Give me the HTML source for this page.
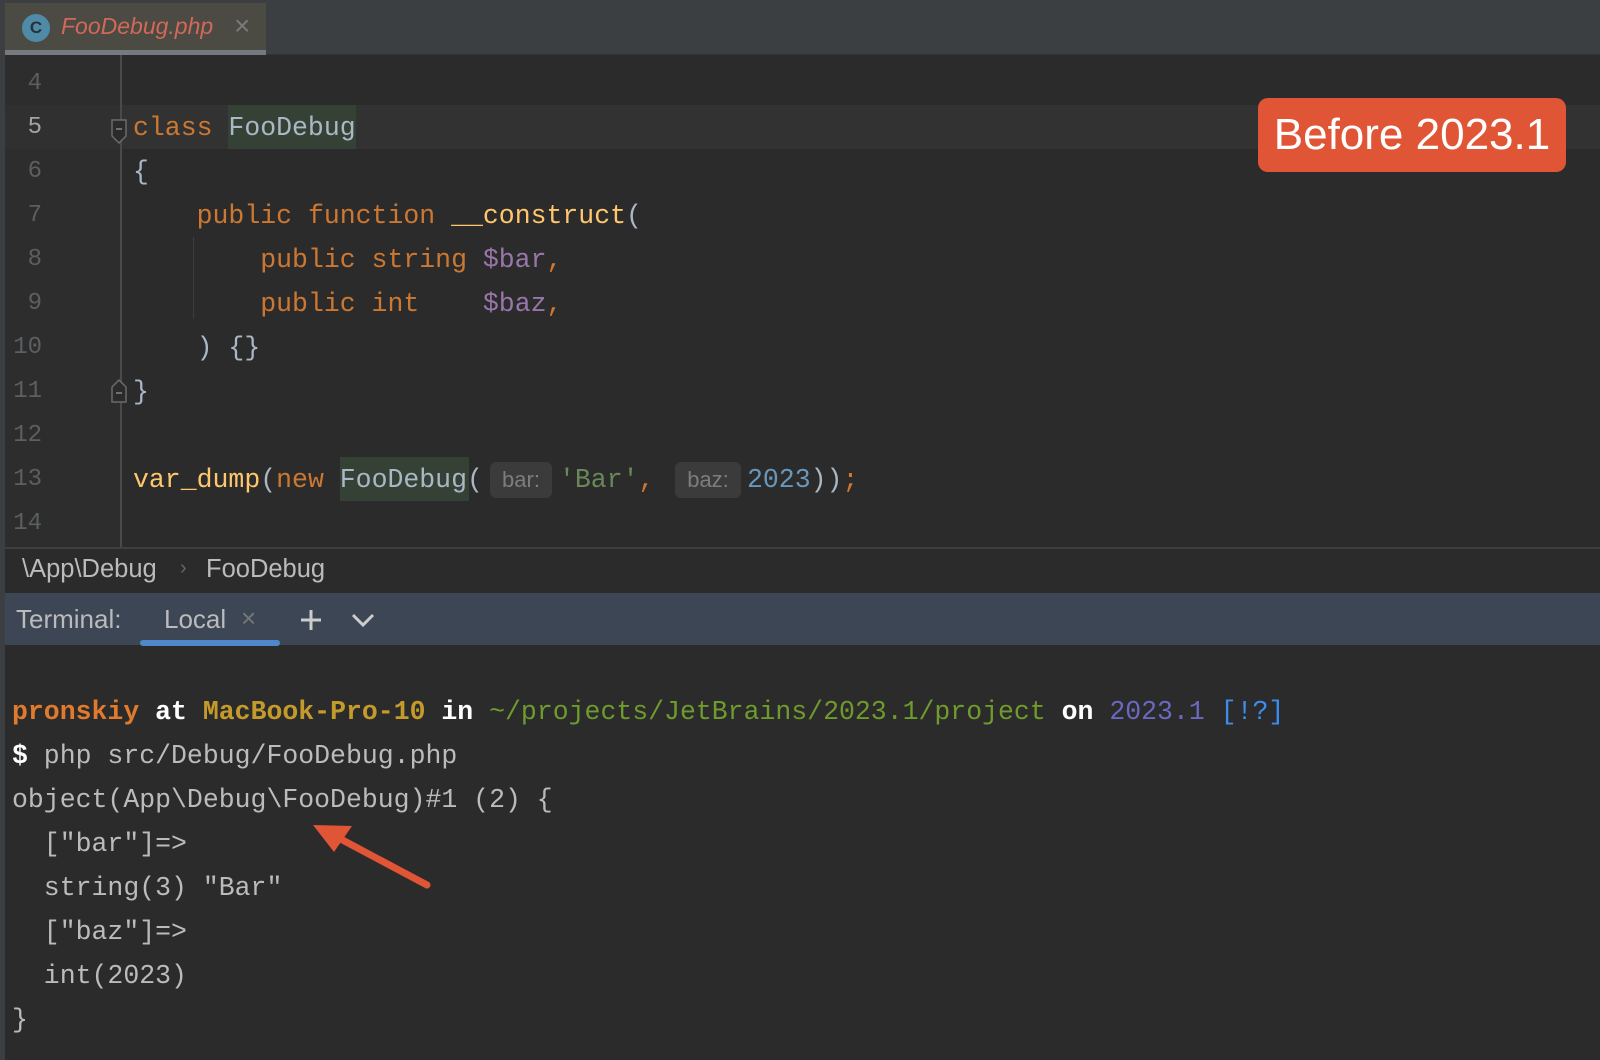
<!DOCTYPE html>
<html><head><meta charset="utf-8"><style>
*{margin:0;padding:0;box-sizing:border-box}
body{width:1600px;height:1060px;background:#2b2b2b;position:relative;overflow:hidden;font-family:"Liberation Sans",sans-serif}
.mono{font-family:"Liberation Mono",monospace;font-size:26.5px;white-space:pre;position:absolute;line-height:44px}
.ln{position:absolute;left:8px;width:34px;text-align:right;font-family:"Liberation Mono",monospace;font-size:24px;color:#5c5f61;line-height:44px}
.k{color:#cc7832}.c{color:#a9b7c6}.v{color:#9876aa}.s{color:#6a8759}.n{color:#6897bb}.f{color:#ffc66d}
.hint{position:absolute;background:#3b3b3b;color:#7d7d7d;font-size:22px;border-radius:6px;height:36px;line-height:36px;text-align:center}
.t{color:#bbbbbb}
</style></head><body>
<div style="position:absolute;left:0;top:0;width:1600px;height:3px;background:#3c3f41"></div>
<div style="position:absolute;left:0;top:0;width:5px;height:1060px;background:#3c3f41"></div>
<div style="position:absolute;left:5px;top:3px;width:1595px;height:52px;background:#3c3f41;border-bottom:1px solid #323232"></div>
<div style="position:absolute;left:5px;top:3px;width:261px;height:52px;background:#4b4a43"></div>
<div style="position:absolute;left:5px;top:50px;width:261px;height:5px;background:#747a80"></div>
<div style="position:absolute;left:22px;top:14px;width:28px;height:28px;border-radius:50%;background:#4f8aa6;color:#26323a;font-size:17px;font-weight:bold;text-align:center;line-height:28px">C</div>
<div style="position:absolute;left:61px;top:13px;font-size:23px;font-style:italic;color:#d2685a">FooDebug.php</div>
<div style="position:absolute;left:234px;top:10px;font-size:28px;color:#7a7a7a">×</div>
<div style="position:absolute;left:5px;top:55px;width:116px;height:493px;background:#2d2d2d"></div>
<div style="position:absolute;left:120px;top:55px;width:2px;height:493px;background:#4a4a4a"></div>
<div style="position:absolute;left:122px;top:105px;width:1478px;height:44px;background:#323232"></div>
<div style="position:absolute;left:5px;top:105px;width:115px;height:44px;background:#303030"></div>
<div class="ln" style="top:62px">4</div>
<div class="ln" style="top:106px;color:#a4a3a3">5</div>
<div class="ln" style="top:150px">6</div>
<div class="ln" style="top:194px">7</div>
<div class="ln" style="top:238px">8</div>
<div class="ln" style="top:282px">9</div>
<div class="ln" style="top:326px">10</div>
<div class="ln" style="top:370px">11</div>
<div class="ln" style="top:414px">12</div>
<div class="ln" style="top:458px">13</div>
<div class="ln" style="top:502px">14</div>
<svg style="position:absolute;left:110px;top:118px" width="20" height="28"><path d="M2 2H16V18L9 25L2 18Z" fill="#2b2b2b" stroke="#6b6b6b" stroke-width="1.5"/><path d="M6 11H12" stroke="#888" stroke-width="1.5"/></svg>
<svg style="position:absolute;left:110px;top:378px" width="20" height="26"><path d="M2 24H16V9L9 2L2 9Z" fill="#2b2b2b" stroke="#6b6b6b" stroke-width="1.5"/><path d="M6 15H12" stroke="#888" stroke-width="1.5"/></svg>
<div style="position:absolute;left:193px;top:237px;width:1px;height:82px;background:#3d3d3d"></div>
<div style="position:absolute;left:228px;top:105px;width:128px;height:44px;background:#344134"></div>
<div class="mono" style="left:133px;top:106px"><span class="k">class</span> <span class="c">FooDebug</span></div>
<div class="mono c" style="left:133px;top:150px">{</div>
<div class="mono" style="left:133px;top:194px">    <span class="k">public function</span> <span class="f">__construct</span><span class="c">(</span></div>
<div class="mono" style="left:133px;top:238px">        <span class="k">public string</span> <span class="v">$bar</span><span class="k">,</span></div>
<div class="mono" style="left:133px;top:282px">        <span class="k">public int</span>    <span class="v">$baz</span><span class="k">,</span></div>
<div class="mono c" style="left:133px;top:326px">    ) {}</div>
<div class="mono c" style="left:133px;top:370px">}</div>
<div style="position:absolute;left:340px;top:457px;width:129px;height:44px;background:#344134"></div>
<div class="mono" style="left:133px;top:458px"><span class="f">var_dump</span><span class="c">(</span><span class="k">new</span> <span class="c">FooDebug(</span></div>
<div class="hint" style="left:490px;top:462px;width:62px">bar:</div>
<div class="mono" style="left:559px;top:458px"><span class="s">'Bar'</span><span class="k">,</span></div>
<div class="hint" style="left:675px;top:462px;width:66px">baz:</div>
<div class="mono" style="left:747px;top:458px"><span class="n">2023</span><span class="c">))</span><span class="k">;</span></div>
<div style="position:absolute;left:1258px;top:98px;width:308px;height:74px;background:#e05535;border-radius:10px;color:#fff;font-size:44px;line-height:74px;text-align:center">Before 2023.1</div>
<div style="position:absolute;left:5px;top:547px;width:1595px;height:2px;background:#3c3f41"></div>
<div style="position:absolute;left:22px;top:555px;font-size:25.5px;color:#bbb">\App\Debug</div>
<div style="position:absolute;left:180px;top:557px;font-size:20px;color:#666">›</div>
<div style="position:absolute;left:206px;top:555px;font-size:25.5px;color:#bbb">FooDebug</div>
<div style="position:absolute;left:5px;top:593px;width:1595px;height:52px;background:#3c4654"></div>
<div style="position:absolute;left:16px;top:604px;font-size:26px;color:#bbb">Terminal:</div>
<div style="position:absolute;left:164px;top:604px;font-size:26px;color:#bbb">Local</div>
<div style="position:absolute;left:241px;top:603px;font-size:26px;color:#777">×</div>
<div style="position:absolute;left:140px;top:640px;width:140px;height:6px;border-radius:3px;background:#4f87c8"></div>
<svg style="position:absolute;left:298px;top:607px" width="26" height="26"><path d="M13 3V23M3 13H23" stroke="#ccc" stroke-width="3"/></svg>
<svg style="position:absolute;left:350px;top:610px" width="26" height="20"><path d="M3 5L13 15L23 5" stroke="#ccc" stroke-width="3" fill="none"/></svg>
<div class="mono" style="left:12px;top:690px;font-weight:bold"><span style="color:#e07a2c">pronskiy</span> <span style="color:#fff">at</span> <span style="color:#c49a2a">MacBook-Pro-10</span> <span style="color:#fff">in</span> <span style="color:#6f9a2c;font-weight:normal">~/projects/JetBrains/2023.1/project</span> <span style="color:#fff">on</span> <span style="color:#6a68c0;font-weight:normal">2023.1</span> <span style="color:#3b8ef0;font-weight:normal">[!?]</span></div>
<div class="mono t" style="left:12px;top:734px"><b style="color:#fff">$</b> php src/Debug/FooDebug.php</div>
<div class="mono t" style="left:12px;top:778px">object(App\Debug\FooDebug)#1 (2) {</div>
<div class="mono t" style="left:12px;top:822px">  ["bar"]=></div>
<div class="mono t" style="left:12px;top:866px">  string(3) "Bar"</div>
<div class="mono t" style="left:12px;top:910px">  ["baz"]=></div>
<div class="mono t" style="left:12px;top:954px">  int(2023)</div>
<div class="mono t" style="left:12px;top:998px">}</div>
<svg style="position:absolute;left:0;top:0" width="1600" height="1060"><path d="M427 885L335 836" stroke="#e05535" stroke-width="7" stroke-linecap="round"/><path d="M313 825L352 826L334 852Z" fill="#e05535"/></svg>
</body></html>
